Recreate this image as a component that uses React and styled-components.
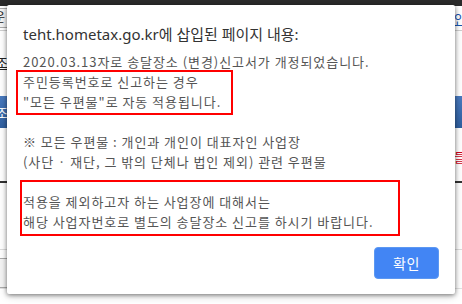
import React from "react";
import styled, { createGlobalStyle } from "styled-components";

const Global = createGlobalStyle`
  html, body { margin: 0; padding: 0; }
  body {
    width: 462px; height: 304px; overflow: hidden; background: #fff;
    font-family: "Noto Sans", "Noto Sans CJK KR", sans-serif;
  }
`;

const Stage = styled.div`
  position: relative;
  width: 462px;
  height: 304px;
  overflow: hidden;
`;

/* ---------- background page ---------- */
const Page = styled.div`
  display: flex;
  flex-direction: column;
  width: 462px;
  height: 304px;
`;

const TopStrip = styled.div`
  height: 6px;
  background: #2b2b2b;
  flex: none;
`;

const Band = styled.div`
  flex: none;
  height: ${(p) => p.$h}px;
  display: flex;
  justify-content: space-between;
  align-items: center;
  background: ${(p) => p.$bg || "#fff"};
  border-bottom: ${(p) => (p.$line ? p.$line : "none")};
  font-size: 13px;
  color: ${(p) => p.$color || "#222"};
  overflow: hidden;
`;

const EdgeBox = styled.div`
  width: 10px;
  height: ${(p) => p.$h}px;
  margin-left: -3px;
  border: 1px solid #aaa;
  background: #f4f4f4;
  font-size: 12px;
  line-height: ${(p) => p.$h}px;
  overflow: hidden;
  text-indent: -4px;
`;

const EdgeText = styled.span`
  font-size: 13px;
  color: ${(p) => p.$color || "#222"};
  text-decoration: ${(p) => (p.$u ? "underline" : "none")};
  margin: 0 -4px;
`;

/* ---------- dialog ---------- */
const Dialog = styled.div`
  position: absolute;
  left: 7px;
  top: 5px;
  width: 448px;
  height: 289px;
  box-sizing: border-box;
  background: #fff;
  border-radius: 2px;
  box-shadow: 0 1px 4px rgba(0, 0, 0, 0.45), 0 2px 8px rgba(0, 0, 0, 0.2);
  padding: 19px 16px 15px 16px;
  display: flex;
  flex-direction: column;
`;

const Title = styled.div`
  font-size: 15px;
  line-height: 20px;
  color: #333;
  margin-bottom: 8px;
`;

const Message = styled.div`
  position: relative;
  font-family: "Noto Sans CJK KR", "Noto Sans", sans-serif;
  font-size: 13px;
  letter-spacing: 0.95px;
  line-height: 20px;
  color: #555;
  white-space: pre-line;
`;

const Mark = styled.div`
  position: absolute;
  left: ${(p) => p.$l}px;
  top: ${(p) => p.$t}px;
  width: ${(p) => p.$w}px;
  height: ${(p) => p.$h}px;
  box-sizing: border-box;
  border: 2px solid #ff0000;
  pointer-events: none;
`;

const Footer = styled.div`
  margin-top: auto;
  display: flex;
  justify-content: flex-end;
`;

const Button = styled.button`
  width: 65px;
  height: 32px;
  border: 1px solid #5c98f2;
  border-radius: 4px;
  background: #4285f4;
  color: #fff;
  font-family: "Noto Sans CJK KR", sans-serif;
  font-size: 14px;
  letter-spacing: 0.5px;
  padding: 0;
  cursor: pointer;
`;

const text = `2020.03.13자로 송달장소 (변경)신고서가 개정되었습니다.
주민등록번호로 신고하는 경우
"모든 우편물"로 자동 적용됩니다.

※ 모든 우편물 : 개인과 개인이 대표자인 사업장
(사단 · 재단, 그 밖의 단체나 법인 제외) 관련 우편물

적용을 제외하고자 하는 사업장에 대해서는
해당 사업자번호로 별도의 송달장소 신고를 하시기 바랍니다.`;

export default function App() {
  return (
    <>
      <Global />
      <Stage>
        <Page>
          <TopStrip />
          <Band $h={24} $line="1px solid #cfcfcf">
            <EdgeBox $h={18}>운</EdgeBox>
            <EdgeText $color="#1a56b0" $u>인</EdgeText>
          </Band>
          <Band $h={22} />
          <Band $h={18}>
            <EdgeText $u>조</EdgeText>
            <span />
          </Band>
          <Band $h={25} />
          <Band $h={32} $bg="linear-gradient(#4a7bc0, #2f5f9f)" $color="#fff">
            <EdgeText $color="#fff">조</EdgeText>
            <span />
          </Band>
          <Band $h={20} />
          <Band $h={16}>
            <span />
            <EdgeText $color="#d0021b">들</EdgeText>
          </Band>
          <Band $h={17} $line="2px solid #333" />
          <Band $h={66} $line="1px solid #dcdcdc" />
          <Band $h={8} />
          <Band $h={30} $line="1px solid #e2e2e2">
            <EdgeBox $h={28} />
            <span />
          </Band>
        </Page>

        <Dialog role="alertdialog">
          <Title>teht.hometax.go.kr에 삽입된 페이지 내용:</Title>
          <Message>
            {text}
            <Mark $l={-7} $t={18} $w={217} $h={45} />
            <Mark $l={-3} $t={128} $w={380} $h={56} />
          </Message>
          <Footer>
            <Button>확인</Button>
          </Footer>
        </Dialog>
      </Stage>
    </>
  );
}
